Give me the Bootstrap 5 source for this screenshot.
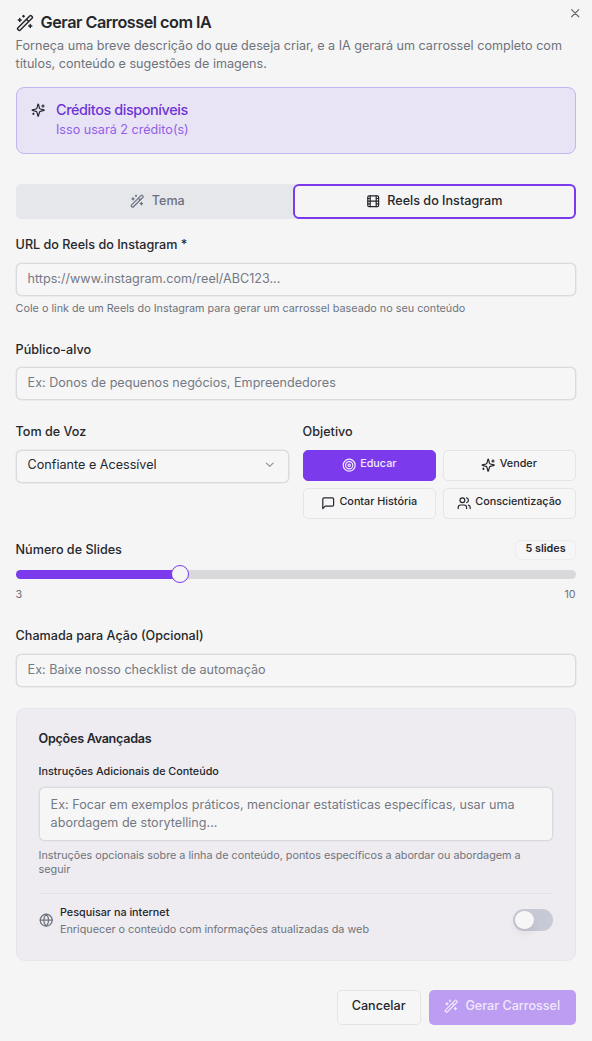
<!DOCTYPE html>
<html lang="pt-BR">
<head>
<meta charset="utf-8">
<meta name="viewport" content="width=device-width, initial-scale=1">
<title>Gerar Carrossel com IA</title>
<link href="https://cdn.jsdelivr.net/npm/bootstrap@5.3.0/dist/css/bootstrap.min.css" rel="stylesheet">
<style>
:root{--ink:#25272c;--soft:#6f737c;--brand:#7c3aed;--edge:#d8dadd}
body{background:#f5f5f5;color:var(--ink);font-family:Inter,"Liberation Sans",sans-serif;font-size:12.6px;line-height:18px}
.dialog{padding:12px 16.4px 0 15.6px;width:592px;height:1041px;overflow:hidden}
svg{fill:none;stroke:currentColor;stroke-width:2;stroke-linecap:round;stroke-linejoin:round;flex-shrink:0;display:block}
.dialog-title{font-size:16.2px;line-height:20px;font-weight:600;letter-spacing:-.48px;gap:7px;margin:0 0 4.5px}
.soft{color:var(--soft)}
.x-btn{position:absolute;top:6.4px;right:9.4px;padding:0;border:0;background:none;color:#68696c}
.credits{height:67px;margin:14.5px 0 0;padding:12px 14px;border:1px solid #c5b5f0;border-radius:8px;background:#e9e4f5;gap:11px}
.credits h2{font-size:14.4px;line-height:20px;font-weight:500;letter-spacing:-.4px;color:#6d35d6;margin:0}
.credits p{color:#9260e8;margin:.6px 0 0}
.tabs{height:35px;margin-top:30px;background:#e5e7eb;border-radius:5px}
.tabs button{flex:1 1 0;font-size:12.6px;line-height:18px;font-weight:500;gap:7px;border:0;background:none;color:#6b7080;padding:0 0 1px 7px}
.tabs button.on{flex:0 0 283px;padding-left:0;border:2px solid var(--brand);border-radius:6px;background:#f5f5f6;color:var(--ink)}
.lbl{display:block;font-weight:500;line-height:18px;margin:0}
.form-control,.form-select{height:33px;margin-top:8.5px;padding:0 11px 1px;border:1px solid var(--edge);border-radius:5.5px;background-color:#f6f6f7;font-size:12.6px;line-height:18px;color:var(--ink);box-shadow:0 0 0 .5px #dfe1e3}
.form-control::placeholder{color:#747984;opacity:1}
.pick{display:flex;align-items:center;justify-content:space-between;text-align:left;width:100%;background-image:none;padding-bottom:3px}
.pick svg{stroke:#8c8e93}
.tiny{font-size:10.8px;line-height:14.2px}
.goals{display:grid;grid-template-columns:1fr 1fr;gap:7px;margin-top:8.5px}
.goals .btn{height:31px;padding:0 0 3px;font-size:10.8px;font-weight:500;line-height:14px;border:1px solid #e4e5e8;border-radius:5px;display:flex;align-items:center;justify-content:center;gap:4px;color:var(--ink);background:#f6f6f7}
.goals .btn svg{position:relative;top:1px}
.goals .btn.on{background:var(--brand);border-color:var(--brand);color:#f3ebff}
.count{height:20px;padding:0 9px;border:1px solid #ebecee;border-radius:6px;font-size:10.8px;line-height:16px;font-weight:600;background:#f6f6f7}
.track{height:8.5px;border-radius:5px;background:#d9d9dc;margin-top:10.2px;position:relative}
.track .fill{height:100%;border-radius:5px;background:var(--brand)}
.track .knob{position:absolute;top:-5px;width:18px;height:18px;border-radius:50%;border:1px solid var(--brand);background:#f5f5f6;transform:translateX(-50%)}
.panel{height:253px;margin-top:21.5px;padding:20.5px 22px 0;background:#eeecf0;border:1px solid #e6e6ea;border-radius:9px}
.panel h3{font-size:12.6px;line-height:18px;font-weight:600;letter-spacing:-.29px;margin:0}
.panel textarea.form-control{height:54px;padding:8px 11px;resize:none;overflow:hidden}
.panel .rule{height:1.5px;background:#e2e2e6;margin-top:15.5px}
.toggle{width:39.5px;height:22.5px;border-radius:12px;background:#c8c9d6;padding:2px;position:relative;top:-1px}
.toggle i{display:block;width:18.5px;height:18.5px;border-radius:50%;background:#f6f6f7;box-shadow:0 4px 8px rgba(0,0,0,.08)}
.actions{margin-top:28.5px;gap:8px}
.actions .btn{height:35px;padding:0 0 3px;font-size:12.6px;font-weight:500;line-height:18px;border-radius:5px;display:flex;align-items:center;justify-content:center;gap:7px}
.actions .btn svg{margin-top:1px}
.cancel{width:84px;border:1px solid #e3e4e7;background:#f6f6f7;color:var(--ink)}
.submit{width:147px;border:0;background:#bc9df2;color:#f1e8fd}
</style>
</head>
<body>
<svg width="0" height="0" class="position-absolute" aria-hidden="true">
<symbol id="wand" viewBox="0 0 24 24"><path d="m21.64 3.64-1.28-1.28a1.21 1.21 0 0 0-1.72 0L2.36 18.64a1.21 1.21 0 0 0 0 1.72l1.28 1.28a1.2 1.2 0 0 0 1.72 0L21.64 5.36a1.2 1.2 0 0 0 0-1.72M14 7l3 3M5 6v4M19 14v4M10 2v2M7 8H3M21 16h-4M11 3H9"/></symbol>
<symbol id="sparkles" viewBox="0 0 24 24"><path d="M9.937 15.5A2 2 0 0 0 8.5 14.063l-6.135-1.582a.5.5 0 0 1 0-.962L8.5 9.936A2 2 0 0 0 9.937 8.5l1.582-6.135a.5.5 0 0 1 .963 0L14.063 8.5A2 2 0 0 0 15.5 9.937l6.135 1.581a.5.5 0 0 1 0 .964L15.5 14.063a2 2 0 0 0-1.437 1.437l-1.582 6.135a.5.5 0 0 1-.963 0zM20 3v4M22 5h-4M4 17v2M5 18H3"/></symbol>
</svg>
<main class="dialog position-relative">
  <button class="x-btn" aria-label="Fechar"><svg width="14.4" height="14.4" viewBox="0 0 24 24"><path d="M18 6 6 18M6 6l12 12"/></svg></button>
  <h1 class="dialog-title d-flex align-items-center"><svg width="18" height="18" style="margin-top:2px"><use href="#wand"/></svg>Gerar Carrossel com IA</h1>
  <p class="soft m-0">Forneça uma breve descrição do que deseja criar, e a IA gerará um carrossel completo com títulos, conteúdo e sugestões de imagens.</p>

  <section class="credits d-flex">
    <svg width="14.4" height="14.4" style="margin-top:3px"><use href="#sparkles"/></svg>
    <div><h2>Créditos disponíveis</h2><p>Isso usará 2 crédito(s)</p></div>
  </section>

  <div class="tabs d-flex">
    <button class="d-flex align-items-center justify-content-center"><svg width="14.4" height="14.4"><use href="#wand"/></svg>Tema</button>
    <button class="on d-flex align-items-center justify-content-center"><svg width="14.4" height="14.4" viewBox="0 0 24 24"><rect x="3" y="3" width="18" height="18" rx="2"/><path d="M7 3v18M3 7.5h4M3 12h18M3 16.5h4M17 3v18M17 7.5h4M17 16.5h4"/></svg>Reels do Instagram</button>
  </div>

  <label class="lbl" for="url" style="margin-top:17px">URL do Reels do Instagram *</label>
  <input id="url" class="form-control" placeholder="https://www.instagram.com/reel/ABC123...">
  <p class="tiny soft mb-0" style="margin-top:6.2px">Cole o link de um Reels do Instagram para gerar um carrossel baseado no seu conteúdo</p>

  <label class="lbl" for="pub" style="margin-top:25.1px">Público-alvo</label>
  <input id="pub" class="form-control" style="height:32.5px;padding-bottom:2px" placeholder="Ex: Donos de pequenos negócios, Empreendedores">

  <div class="d-flex" style="gap:14px;margin-top:23.2px">
    <div style="width:273px"><span class="lbl">Tom de Voz</span>
      <button class="form-select pick" style="margin-top:8.8px">Confiante e Acessível<svg width="13.5" height="13.5" viewBox="0 0 24 24"><path d="m6 9 6 6 6-6"/></svg></button></div>
    <div style="width:273px"><span class="lbl">Objetivo</span>
      <div class="goals" style="margin-top:8.8px">
        <button class="btn on"><svg width="14.4" height="14.4" viewBox="0 0 24 24"><circle cx="12" cy="12" r="10"/><circle cx="12" cy="12" r="6"/><circle cx="12" cy="12" r="2"/></svg>Educar</button>
        <button class="btn"><svg width="14.4" height="14.4"><use href="#sparkles"/></svg>Vender</button>
        <button class="btn"><svg width="14.4" height="14.4" viewBox="0 0 24 24"><path d="M21 15a2 2 0 0 1-2 2H7l-4 4V5a2 2 0 0 1 2-2h14a2 2 0 0 1 2 2z"/></svg>Contar História</button>
        <button class="btn"><svg width="14.4" height="14.4" viewBox="0 0 24 24"><path d="M16 21v-2a4 4 0 0 0-4-4H6a4 4 0 0 0-4 4v2M22 21v-2a4 4 0 0 0-3-3.87M16 3.13a4 4 0 0 1 0 7.75"/><circle cx="9" cy="7" r="4"/></svg>Conscientização</button>
      </div></div>
  </div>

  <div class="d-flex justify-content-between align-items-center" style="margin-top:21px"><span class="lbl">Número de Slides</span><span class="count">5 slides</span></div>
  <div class="track"><div class="fill" style="width:29.3%"></div><span class="knob" style="left:29.3%"></span></div>
  <div class="tiny soft d-flex justify-content-between" style="margin-top:9.2px"><span>3</span><span>10</span></div>

  <label class="lbl" for="cta" style="margin-top:25.1px">Chamada para Ação (Opcional)</label>
  <input id="cta" class="form-control" placeholder="Ex: Baixe nosso checklist de automação">

  <section class="panel">
    <h3>Opções Avançadas</h3>
    <label class="lbl tiny" for="extra" style="margin-top:17px;line-height:14px">Instruções Adicionais de Conteúdo</label>
    <textarea id="extra" class="form-control" placeholder="Ex: Focar em exemplos práticos, mencionar estatísticas específicas, usar uma abordagem de storytelling..."></textarea>
    <p class="tiny soft mb-0" style="margin-top:7.6px">Instruções opcionais sobre a linha de conteúdo, pontos específicos a abordar ou abordagem a seguir</p>
    <div class="rule"></div>
    <div class="d-flex align-items-center" style="margin-top:9.7px">
      <svg class="soft" width="14.4" height="14.4" viewBox="0 0 24 24" style="margin-top:-2px"><circle cx="12" cy="12" r="10"/><path d="M12 2a14.5 14.5 0 0 0 0 20 14.5 14.5 0 0 0 0-20M2 12h20"/></svg>
      <div class="tiny flex-grow-1" style="margin-left:7px;line-height:17px"><div style="font-weight:500">Pesquisar na internet</div><div class="soft">Enriquecer o conteúdo com informações atualizadas da web</div></div>
      <span class="toggle" role="switch" aria-checked="false"><i></i></span>
    </div>
  </section>

  <div class="actions d-flex justify-content-end">
    <button class="btn cancel">Cancelar</button>
    <button class="btn submit"><svg width="14.4" height="14.4"><use href="#wand"/></svg>Gerar Carrossel</button>
  </div>
</main>
<script src="https://cdn.jsdelivr.net/npm/bootstrap@5.3.0/dist/js/bootstrap.bundle.min.js"></script>
</body>
</html>
